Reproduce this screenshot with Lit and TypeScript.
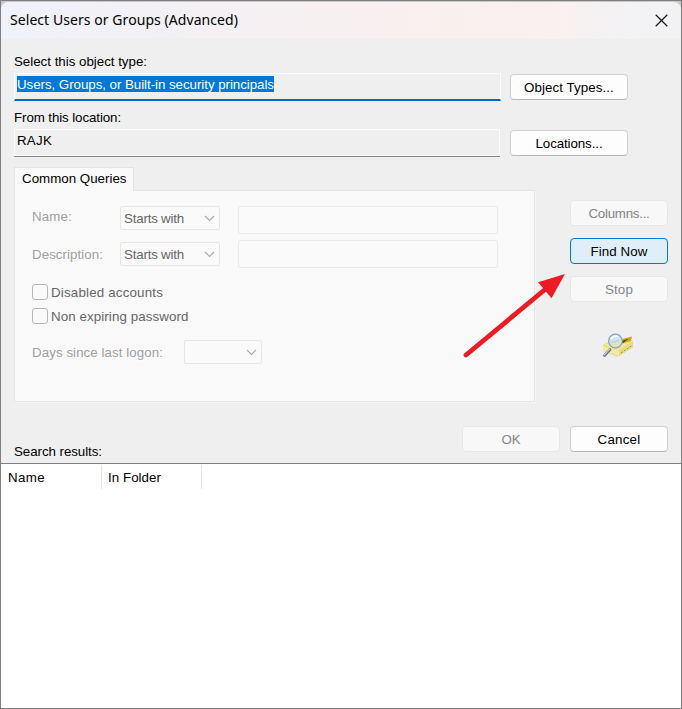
import { LitElement, html, css, svg } from "lit";
import { customElement, property } from "lit/decorators.js";
import { styleMap } from "lit/directives/style-map.js";

const SANS = '"Liberation Sans", Arial, sans-serif';
const TITLE = '"Noto Sans", "Open Sans", sans-serif';
const ctx = document.createElement("canvas").getContext("2d")!;

/** A run of text tracked so that it fills a given advance width. */
@customElement("fit-text")
class FitText extends LitElement {
  @property() text = "";
  @property({ type: Number }) w = 0;
  @property() kind = "ui";
  static styles = css`
    :host { display: block; white-space: pre; }
    span { display: block; }
    .ui { font: 13.33px/18px "Liberation Sans", Arial, sans-serif; height: 16px; }
    .title { font: 14px/20px "Noto Sans", "Open Sans", sans-serif; }
  `;
  render() {
    ctx.font = this.kind === "title" ? `14px ${TITLE}` : `13.33px ${SANS}`;
    const gap = (this.w - ctx.measureText(this.text).width) / this.text.length;
    return html`<span class=${this.kind} style=${styleMap({ letterSpacing: `${gap.toFixed(3)}px` })}>${this.text}</span>`;
  }
}

const t = (text: string, w: number, kind = "ui") => html`<fit-text .text=${text} .w=${w} .kind=${kind}></fit-text>`;

@customElement("dlg-button")
class DlgButton extends LitElement {
  @property() label = "";
  @property({ type: Number }) w = 0;
  @property({ reflect: true }) look = "normal";
  static styles = css`
    :host { display: flex; width: 98px; height: 26px; box-sizing: border-box; align-items: center; justify-content: center;
      border: 1px solid #d0d0d0; border-bottom-color: #b9b9b9; border-radius: 4px; background: #fdfdfd; color: #000; }
    :host([look="wide"]) { width: 118px; }
    :host([look="off"]) { border-color: #e7e7e7; background: #f8f8f8; color: #858585; }
    :host([look="hot"]) { border-color: #0078d4; background: #e0eef9; }
  `;
  render() { return t(this.label, this.w); }
}

const chevron = svg`<svg width="11" height="7" viewBox="0 0 11 7" fill="none" stroke="#ababab" stroke-width="1.1"><path d="M1 1 L5.5 5.5 L10 1"/></svg>`;

@customElement("app-root")
class AppRoot extends LitElement {
  static styles = css`
    :host { display: block; }
    .window { position: relative; box-sizing: border-box; width: 682px; height: 709px; overflow: hidden; background: #efefef;
      border: 1px solid #808080; border-top: 0; display: flex; flex-direction: column; color: #000; }
    .edge { height: 2px; flex: none; background: linear-gradient(#7d7d7d 50%, #c9c9c9 50%); }
    .bar { flex: none; height: 37px; box-sizing: border-box; padding: 0 13px 1px 9px; display: flex; align-items: center;
      justify-content: space-between; border-radius: 7px 7px 0 0;
      background: linear-gradient(90deg, #eff2f9 0, #f4f0f4 30%, #f9f0ee 66%, #f8f1f0 82%, #f3f2f4 92%, #f2f2f5 100%); }
    .top { background: #c9c9c9; flex: none; }
    .body { flex: none; height: 424px; display: flex; flex-direction: column; }
    .label { height: 16px; padding-left: 13px; display: flex; }
    .first { margin-top: 14px; }
    .second { margin-top: 8px; }
    .line { display: flex; gap: 9px; padding-left: 13px; height: 28px; margin-top: 4px; }
    .edit { box-sizing: border-box; width: 487px; height: 28px; border: 1px solid #fbfbfb; padding: 2px 0 0 2px; display: flex; align-items: flex-start; }
    .focus { border-bottom: 2px solid #0067c0; }
    .idle { width: 486px; box-shadow: 0 1px 0 #858585; height: 27px; margin: 0 1px 0 0; padding-top: 2px; }
    .sel { background: #0078d7; color: #fff; height: 16px; display: flex; }
    .line dlg-button { margin-top: 1px; }
    .main { display: flex; margin-top: 10px; }
    .tabs { width: 521px; margin-left: 13px; height: 235px; display: flex; flex-direction: column; }
    .tab { z-index: 1; box-sizing: border-box; width: 120px; height: 24px; margin-bottom: -1px; background: #f9f9f9; border: 1px solid #e4e4e4;
      border-bottom: 0; padding: 2px 0 0 7px; flex: none; }
    .panel { flex: 1; box-sizing: border-box; background: #f9f9f9; border: 1px solid #e4e4e4; padding: 15px 0 0 17px; box-shadow: 1px 1px 0 #f5f5f5; }
    .row { display: flex; height: 28px; margin-bottom: 6px; }
    .row > .name { width: 88px; padding-top: 2px; }
    .row + .row > .name { padding-top: 6px; }
    .row + .row > .combo { margin-top: 2px; }
    .faded { color: #a0a0a0; text-shadow: 1px 1px 0 #fff; }
    .combo { box-sizing: border-box; width: 100px; height: 24px; border: 1px solid #e6e6e6; border-radius: 2px; background: #fafafa; color: #666;
      display: flex; align-items: center; justify-content: space-between; padding: 0 4px 0 3px; }
    .short { width: 78px; justify-content: flex-end; }
    .box { box-sizing: border-box; width: 260px; height: 28px; border: 1px solid #e9e9e9; border-radius: 2px; margin-left: 18px; background: #fafafa; }
    .check { display: flex; align-items: center; height: 16px; margin-bottom: 8px; gap: 3px; color: #666; }
    .checks { padding-top: 10px; }
    .tick { box-sizing: border-box; width: 16px; height: 16px; border: 1px solid #b8b8b8; border-radius: 3px; background: #fafafa; }
    .days { display: flex; padding-top: 8px; }
    .days > .name { width: 152px; padding-top: 4px; }
    .side { margin-left: 35px; padding-top: 33px; display: flex; flex-direction: column; gap: 12px; }
    .icon { width: 34px; height: 28px; margin: 18px 0 0 32px; }
    .foot { display: flex; justify-content: flex-end; gap: 10px; padding-right: 13px; margin-top: 24px; height: 17px; position: relative; }
    .found { padding-left: 13px; height: 20px; display: flex; position: relative; }
    .list { flex: 1; background: #fff; border-top: 1px solid #808080; }
    .head { display: flex; height: 24px; padding-top: 1px; }
    .cell { box-sizing: border-box; width: 100px; border-right: 1px solid #e5e5e5; padding: 4px 0 0 6px; }
    .cell.lead { width: 101px; padding-left: 7px; }
    .arrow { position: absolute; left: 459px; top: 270px; pointer-events: none; }
  `;
  private row(name: string, w: number) {
    return html`<div class="row"><div class="name faded">${t(name, w)}</div>
      <div class="combo">${t("Starts with", 60)}${chevron}</div><div class="box"></div></div>`;
  }
  render() {
    return html`<div class="window">
      <div class="edge"></div>
      <div class="top"><div class="bar">${t("Select Users or Groups (Advanced)", 228, "title")}
        <svg width="13" height="13" viewBox="0 0 13 13" stroke="#1b1b1b" stroke-width="1.25"><path d="M.7.7 12.3 12.3M12.3.7.7 12.3"/></svg></div></div>
      <div class="body">
        <div class="label first">${t("Select this object type:", 133)}</div>
        <div class="line"><div class="edit focus"><span class="sel">${t("Users, Groups, or Built-in security principals", 257)}</span></div>
          <dlg-button look="wide" .label=${"Object Types..."} .w=${90}></dlg-button></div>
        <div class="label second">${t("From this location:", 107)}</div>
        <div class="line"><div class="edit idle">${t("RAJK", 35)}</div>
          <dlg-button look="wide" .label=${"Locations..."} .w=${67}></dlg-button></div>
        <div class="main">
          <div class="tabs"><div class="tab">${t("Common Queries", 104.5)}</div>
            <div class="panel">
              ${this.row("Name:", 40)}${this.row("Description:", 71)}
              <div class="checks">
                <div class="check"><span class="tick"></span>${t("Disabled accounts", 112)}</div>
                <div class="check"><span class="tick"></span>${t("Non expiring password", 137.5)}</div>
              </div>
              <div class="days"><div class="name faded">${t("Days since last logon:", 131)}</div><div class="combo short">${chevron}</div></div>
            </div></div>
          <div class="side">
            <dlg-button look="off" .label=${"Columns..."} .w=${61}></dlg-button>
            <dlg-button look="hot" .label=${"Find Now"} .w=${57}></dlg-button>
            <dlg-button look="off" .label=${"Stop"} .w=${28}></dlg-button>
            <svg class="icon" viewBox="602 332 34 28">
              <path d="M603 345 L616 339 L633 341 L633 347 L618 356.500 L603 351Z" fill="#d5c86a"/>
              <path d="M603 345 L616 340 L633 341 L619 351Z" fill="#eee795"/>
              <path d="M618 340 L632 336.500 L631 341 L621 344Z" fill="#d4a31c"/>
              <path d="M619 342 L629 338.500 L623 343Z" fill="#493f1c"/>
              <path d="M603 345.500 L619 351 L619 356 L603 351Z" fill="#f1eba6"/>
              <path d="M619 351 L633 341 L633 347 L619 356.500Z" fill="#e5db87"/>
              <path d="M621 353 L632.500 345" stroke="#9a8d48" stroke-width="1" stroke-dasharray="2 1.5"/>
              <path d="M610 349.500 L604.500 355.500" stroke="#737783" stroke-width="2.800" stroke-linecap="round"/>
              <path d="M609.500 349.200 L604.300 355" stroke="#d4d7df" stroke-width="1.1" stroke-linecap="round"/>
              <circle cx="615.4" cy="341" r="6.8" fill="#cfe6f5" stroke="#8fa5ba" stroke-width="1.3"/>
              <path d="M610 342 Q615 339.500 621.5 341.5 Q620 347 615 347 Q611 347 610 342Z" fill="#dde3c4"/>
              <path d="M611 339 Q613 335.5 618 336.5" fill="none" stroke="#fff" stroke-width="1.6"/>
              <path d="M611 343 L619 340" stroke="#b3cbd6" stroke-width="1"/>
            </svg>
          </div>
        </div>
        <div class="foot"><dlg-button look="off" .label=${"OK"} .w=${19}></dlg-button><dlg-button .label=${"Cancel"} .w=${43}></dlg-button></div>
        <div class="found">${t("Search results:", 88)}</div>
      </div>
      <div class="list"><div class="head"><div class="cell lead">${t("Name", 37)}</div><div class="cell">${t("In Folder", 53)}</div></div></div>
      <svg class="arrow" width="110" height="92" viewBox="460 270 110 92">
        <path d="M466 355 L548 287" stroke="#ed1c24" stroke-width="4.8" stroke-linecap="round"/>
        <path d="M565 274 L538 282.2 L551.5 298.3Z" fill="#ed1c24"/>
      </svg>
    </div>`;
  }
}
